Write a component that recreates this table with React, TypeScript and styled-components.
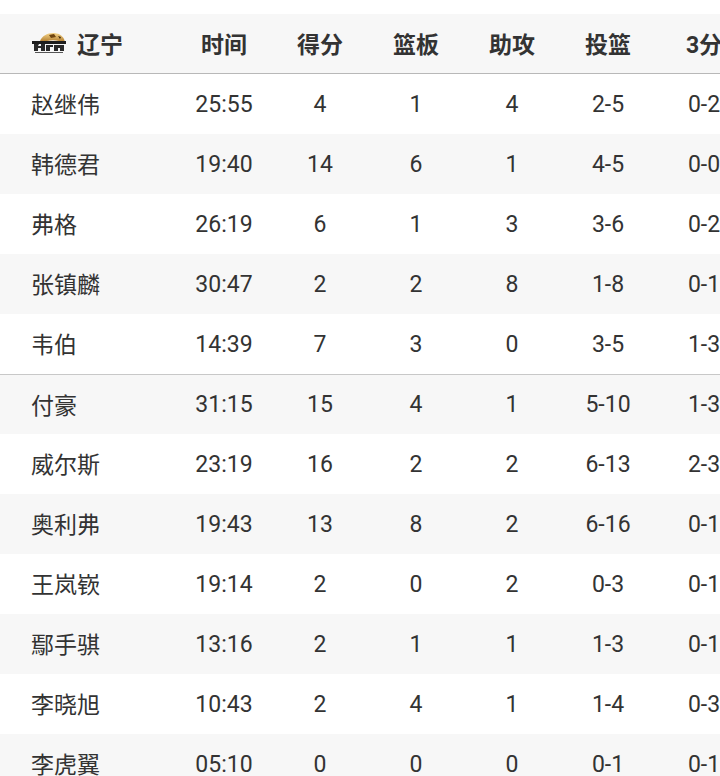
import React from 'react';
import styled, { createGlobalStyle } from 'styled-components';

const GlobalStyle = createGlobalStyle`
  html, body {
    margin: 0;
    padding: 0;
    background: #ffffff;
  }
  body {
    font-family: Roboto, "Noto Sans CJK SC", sans-serif;
    color: #333333;
  }
`;

const players = [
  { name: '赵继伟', min: '25:55', pts: 4, reb: 1, ast: 4, fg: '2-5', tp: '0-2' },
  { name: '韩德君', min: '19:40', pts: 14, reb: 6, ast: 1, fg: '4-5', tp: '0-0' },
  { name: '弗格', min: '26:19', pts: 6, reb: 1, ast: 3, fg: '3-6', tp: '0-2' },
  { name: '张镇麟', min: '30:47', pts: 2, reb: 2, ast: 8, fg: '1-8', tp: '0-1' },
  { name: '韦伯', min: '14:39', pts: 7, reb: 3, ast: 0, fg: '3-5', tp: '1-3' },
  { name: '付豪', min: '31:15', pts: 15, reb: 4, ast: 1, fg: '5-10', tp: '1-3' },
  { name: '威尔斯', min: '23:19', pts: 16, reb: 2, ast: 2, fg: '6-13', tp: '2-3' },
  { name: '奥利弗', min: '19:43', pts: 13, reb: 8, ast: 2, fg: '6-16', tp: '0-1' },
  { name: '王岚嵚', min: '19:14', pts: 2, reb: 0, ast: 2, fg: '0-3', tp: '0-1' },
  { name: '鄢手骐', min: '13:16', pts: 2, reb: 1, ast: 1, fg: '1-3', tp: '0-1' },
  { name: '李晓旭', min: '10:43', pts: 2, reb: 4, ast: 1, fg: '1-4', tp: '0-3' },
  { name: '李虎翼', min: '05:10', pts: 0, reb: 0, ast: 0, fg: '0-1', tp: '0-1' },
];

const Page = styled.div`
  width: 720px;
  height: 776px;
  overflow: hidden;
  padding-top: 14px;
  box-sizing: border-box;
`;

const Grid = styled.div`
  display: grid;
  grid-template-columns: 176px repeat(6, 96px);
  width: max-content;
`;

const Row = styled.div<{ $alt?: boolean; $line?: boolean }>`
  display: contents;
  & > div {
    background: ${p => (p.$alt ? '#f7f7f7' : '#ffffff')};
    border-top: ${p => (p.$line ? '1px solid #c8c8c8' : '0')};
    height: 60px;
  }
`;

const HeadRow = styled.div`
  display: contents;
  & > div {
    background: #f7f7f7;
    border-bottom: 1px solid #b8b8b8;
    height: 60px;
    font-weight: 700;
    padding-bottom: 2px;
  }
`;

const Cell = styled.div`
  display: flex;
  align-items: center;
  justify-content: center;
  font-size: 23px;
  color: #333333;
  white-space: nowrap;
  box-sizing: border-box;
`;

const NameCell = styled(Cell)`
  justify-content: flex-start;
  padding-left: 31px;
  padding-bottom: 2px;
  gap: 10px;
`;

const Logo = () => (
  <svg width="36" height="22" viewBox="0 0 36 22">
    <defs>
      <linearGradient id="gold" x1="0" y1="0" x2="0" y2="1">
        <stop offset="0" stopColor="#f5d58c" />
        <stop offset="1" stopColor="#b07a2a" />
      </linearGradient>
    </defs>
    <path d="M9 9 C11 4 16 1 22 1 C27 1 31 3 33 7 L34 10 L28 9 C24 8 20 8 16 9 C13 10 11 10 9 9 Z" fill="url(#gold)" />
    <path d="M18 3 L23 2 L25 5 L20 6 Z" fill="#6e4410" />
    <path d="M27 4 L30 5 L29 7 Z" fill="#3a2408" />
    <path d="M1 9 H35 V12 H1 Z" fill="#1e1e1e" />
    <path d="M3 12 H8 L7 14 H10 V12 H14 V19 H10 V16 H7 V19 H3 Z" fill="#2a2a2a" />
    <path d="M15 13 H22 V15 H19 V19 H15 Z M23 13 H33 V19 H29 V16 H27 V19 H23 Z" fill="#2a2a2a" />
    <path d="M4 20 H32 V21 H4 Z" fill="#555" />
  </svg>
);

export default function App() {
  return (
    <>
      <GlobalStyle />
      <Page>
        <Grid>
          <HeadRow>
            <NameCell>
              <Logo />
              辽宁
            </NameCell>
            <Cell>时间</Cell>
            <Cell>得分</Cell>
            <Cell>篮板</Cell>
            <Cell>助攻</Cell>
            <Cell>投篮</Cell>
            <Cell>3分</Cell>
          </HeadRow>
          {players.map((p, i) => (
            <Row key={p.name} $alt={i % 2 === 1} $line={i === 5}>
              <NameCell>{p.name}</NameCell>
              <Cell>{p.min}</Cell>
              <Cell>{p.pts}</Cell>
              <Cell>{p.reb}</Cell>
              <Cell>{p.ast}</Cell>
              <Cell>{p.fg}</Cell>
              <Cell>{p.tp}</Cell>
            </Row>
          ))}
        </Grid>
      </Page>
    </>
  );
}
